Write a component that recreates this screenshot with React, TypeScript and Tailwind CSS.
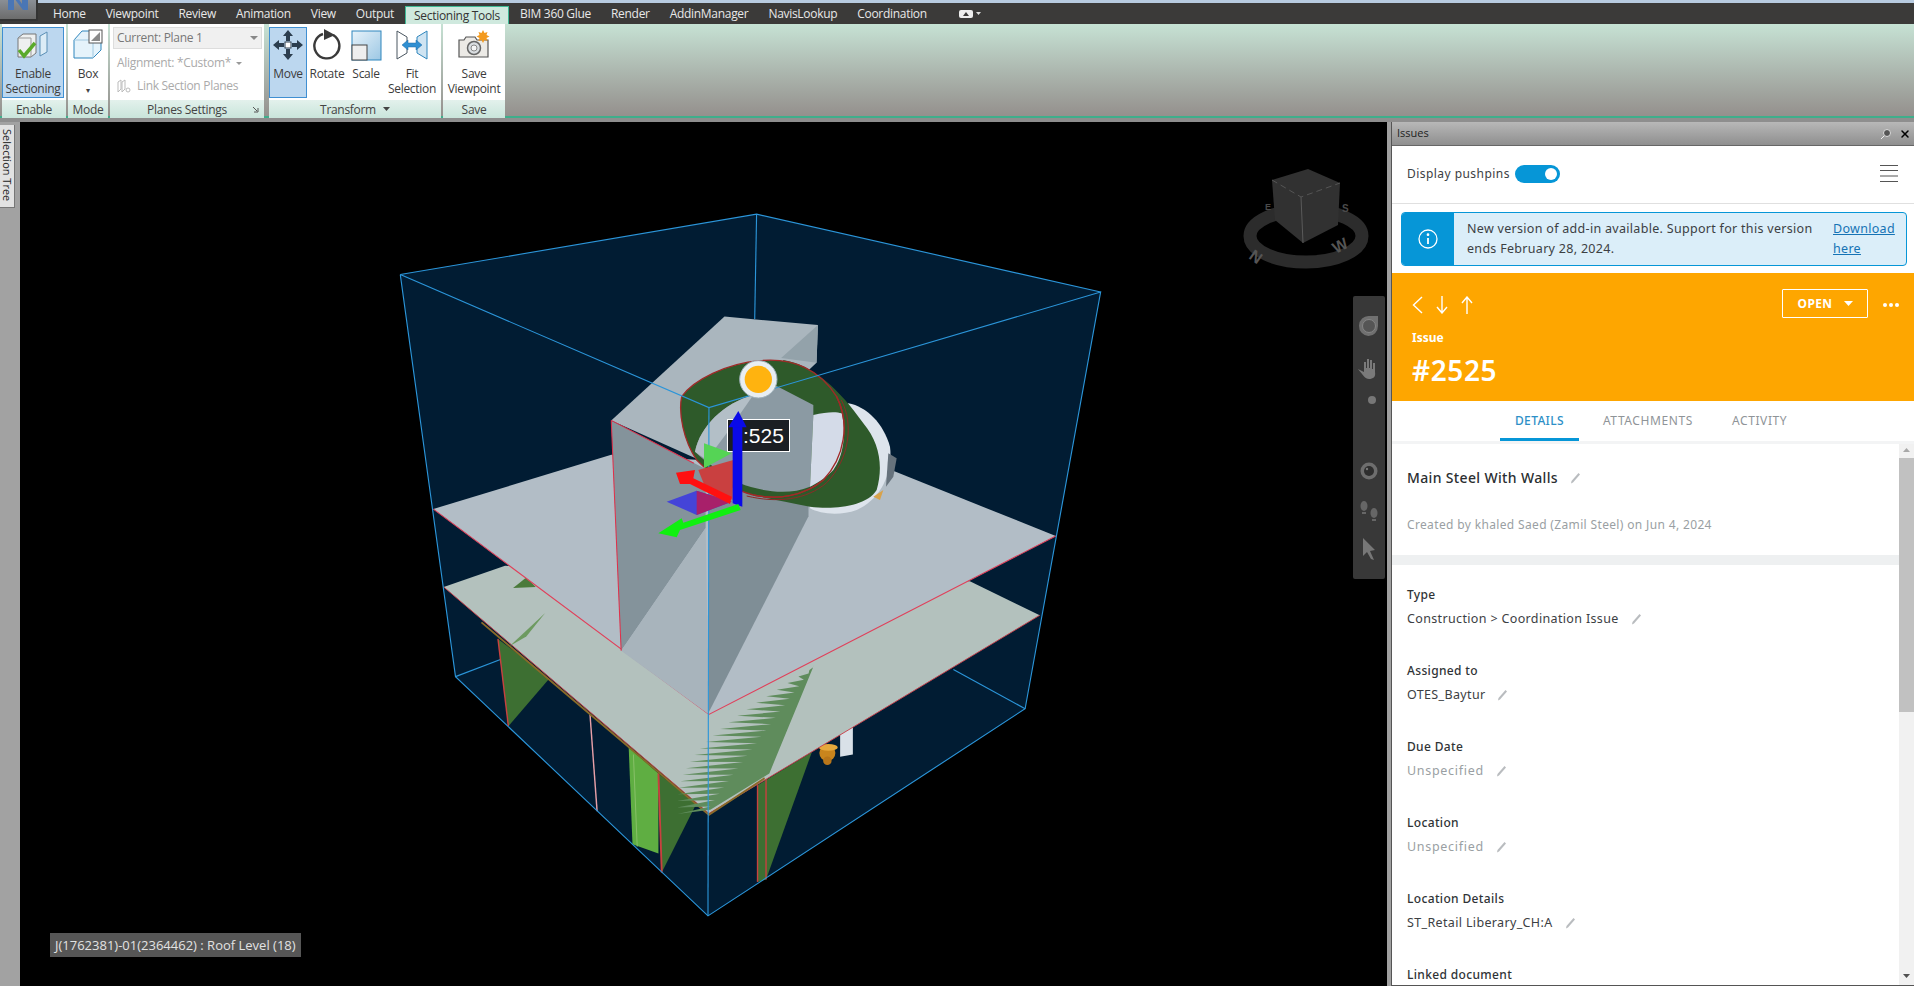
import React from "react";
import { X } from "lucide-react";

const ribbonFont = "font-['Open_Sans','Noto_Sans',sans-serif] tracking-[-0.3px]";
const panelFont = "font-['Noto_Sans','Open_Sans',sans-serif]";

const Pencil = () => (
  <svg width="11" height="12" viewBox="0 0 11 12" className="ml-[12px] shrink-0">
    <path d="M1 11.5 L1.5 9 L8.5 1 L10 2.5 L3 10.5 Z" fill="#b9bcbf" />
  </svg>
);

const tabs = ["Home", "Viewpoint", "Review", "Animation", "View", "Output"];
const tabs2 = ["BIM 360 Glue", "Render", "AddinManager", "NavisLookup", "Coordination"];

function RibbonButton({ label, icon, active, w }: { label: React.ReactNode; icon: React.ReactNode; active?: boolean; w: string }) {
  return (
    <div className={`${w} h-[71px] flex flex-col items-center text-center leading-[15px] text-[12px] text-[#3c3c3c] border ${active ? "bg-[#bcd7ef] border-[#3f8fd2]" : "border-transparent"}`}>
      <div className="h-[36px] mt-[-1px] flex items-center justify-center">{icon}</div>
      <div className="mt-[3px]">{label}</div>
    </div>
  );
}

function RibbonPanel({ label, w, children, extra }: { label: string; w: string; children: React.ReactNode; extra?: React.ReactNode }) {
  return (
    <div className={`${w} flex flex-col bg-white`}>
      <div className="h-[73px] pt-[3px] flex">{children}</div>
      <div className="relative h-[18px] mt-[3px] bg-gradient-to-b from-[#e3f1ec] to-[#c9e5db] flex items-center justify-center gap-[7px] text-[12px] leading-[17px] text-[#444]">
        {label}
        {extra}
      </div>
    </div>
  );
}

const EnableIcon = () => (
  <svg width="34" height="32" viewBox="0 0 34 32">
    <path d="M2 9 L7 5 H20 V24 L15 28 H2 Z" fill="#eef0f0" stroke="#777" />
    <path d="M2 9 H15 V28" fill="none" stroke="#999" />
    <path d="M24 7 L31 3 V23 L24 27 Z" fill="#dcecf6" stroke="#5a8fb5" />
    <path d="M3 21 L8 27 L19 14" fill="none" stroke="#5aaa2b" strokeWidth="3.5" />
  </svg>
);
const BoxIcon = () => (
  <svg width="32" height="32" viewBox="0 0 32 32">
    <path d="M2 11 L10 2 H29 V21 L21 29 H2 Z" fill="#e5f3fb" stroke="#2f86bd" />
    <path d="M2 11 H21 V29 M21 11 L29 2" fill="none" stroke="#9fc8e0" />
    <rect x="17" y="1" width="13" height="13" fill="#fff" stroke="#555" />
    <path d="M19 12 L28 3 V12 Z" fill="#8a8a8a" />
  </svg>
);
const MoveIcon = () => (
  <svg width="32" height="32" viewBox="0 0 32 32" fill="#2c3e4f">
    <path d="M16 1 L21 7 H11 Z M16 31 L21 25 H11 Z M1 16 L7 11 V21 Z M31 16 L25 11 V21 Z" />
    <path d="M14 7h4v5h-4z M14 20h4v5h-4z M7 14h5v4H7z M20 14h5v4h-5z" />
    <rect x="13" y="13" width="6" height="6" fill="#fff" stroke="#2c3e4f" />
  </svg>
);
const RotateIcon = () => (
  <svg width="30" height="32" viewBox="0 0 30 32">
    <path d="M11 5 A12.5 12.5 0 1 0 21 6" fill="none" stroke="#3a3a3a" strokeWidth="2.4" />
    <path d="M12 0 L23 6 L12 11 Z" fill="#3a3a3a" />
  </svg>
);
const ScaleIcon = () => (
  <svg width="31" height="31" viewBox="0 0 31 31">
    <defs>
      <linearGradient id="sc" x1="0" y1="0" x2="1" y2="1">
        <stop offset="0" stopColor="#e8f3fa" />
        <stop offset="1" stopColor="#9cc7e4" />
      </linearGradient>
    </defs>
    <rect x="1" y="1" width="29" height="29" fill="url(#sc)" stroke="#2f86bd" />
    <rect x="1" y="15" width="15" height="15" fill="#eee" stroke="#444" />
  </svg>
);
const FitIcon = () => (
  <svg width="32" height="30" viewBox="0 0 32 30">
    <path d="M1 1 L11 7 V23 L1 29 Z" fill="#fff" stroke="#4a5660" />
    <path d="M31 1 L21 7 V23 L31 29 Z" fill="#cfe4f2" stroke="#2f86bd" />
    <path d="M6 15 L12 10 V13 H20 V10 L26 15 L20 20 V17 H12 V20 Z" fill="#2f8fd2" stroke="#1f6ba5" strokeWidth="0.5" />
  </svg>
);
const CameraIcon = () => (
  <svg width="32" height="32" viewBox="0 0 32 32">
    <path d="M1 11 H6 L8 8 H17 L19 11 H30 V28 H1 Z" fill="#eceae6" stroke="#555" strokeWidth="1.2" />
    <circle cx="16" cy="19" r="6.5" fill="#d9dde0" stroke="#666" strokeWidth="1.5" />
    <circle cx="16" cy="19" r="3" fill="#f5f5f5" stroke="#888" />
    <path d="M25 1 l1.5 3 3-1-1 3 3 1.5-3 1.5 1 3-3-1-1.5 3-1.5-3-3 1 1-3-3-1.5 3-1.5-1-3 3 1z" fill="#f39a1e" />
  </svg>
);

function Scene() {
  const spikes: string[] = [];
  const n = 22;
  for (let i = 0; i <= n; i++) {
    const t = i / n;
    const x = 918 - (918 - 700) * t;
    const y = 990 + (1285 - 990) * t;
    const len = 8 + 115 * Math.sin(t * Math.PI * 0.82);
    spikes.push(`${x},${y}`, `${x - len},${y + 6 + 10 * t}`);
  }
  return (
    <svg width="1367" height="864" viewBox="20 122 1367 864" className="block">
      <rect x="20" y="122" width="1367" height="864" fill="#000" />
      <g transform="translate(380 200) scale(0.47192)">
        <polygon points="43,158 798,30 1527,195 1367,1078 695,1517 160,1010" fill="#011c33" />
        <g stroke="#2b95d9" strokeWidth="2.4" fill="none">
          <polyline points="43,158 798,30 1527,195" />
          <line x1="798" y1="30" x2="794" y2="252" />
          <line x1="160" y1="1010" x2="265" y2="970" />
          <line x1="1367" y1="1078" x2="1215" y2="995" />
        </g>

        {/* lower structure */}
        <polygon points="250,930 272,1115 358,1015 290,960" fill="#3d6f32" />
        <polyline points="250,930 272,1115" stroke="#c8413f" strokeWidth="3" fill="none" />
        <polyline points="445,1090 460,1295" stroke="#e8a0a8" strokeWidth="3" fill="none" />
        <polygon points="527,1160 535,1365 590,1385 590,1215" fill="#5fae42" />
        <polyline points="537,1175 545,1370" stroke="#8ac16a" strokeWidth="2" fill="none" />
        <polygon points="590,1215 597,1425 670,1280" fill="#3d6f32" />
        <polyline points="590,1215 597,1425" stroke="#c8413f" strokeWidth="4" fill="none" />
        <polygon points="800,1240 800,1445 818,1440 915,1170" fill="#3d6f32" />
        <line x1="800" y1="1240" x2="800" y2="1445" stroke="#c8413f" strokeWidth="3" />
        <line x1="818" y1="1225" x2="818" y2="1440" stroke="#c8413f" strokeWidth="3" />
        <polygon points="975,1130 1002,1115 1002,1175 975,1180" fill="#d9e1e8" />
        <circle cx="948" cy="1172" r="17" fill="#c9851d" />
        <ellipse cx="950" cy="1160" rx="20" ry="7" fill="#e6a83c" />
        <circle cx="948" cy="1188" r="9" fill="#b8761a" />
        <polygon points="960,950 990,940 990,962 965,962" fill="#d88a1e" />
        <polygon points="1005,930 1018,928 1012,975 1003,972" fill="#cfd7de" />
        <polygon points="855,1015 878,1002 870,1040 860,1040" fill="#dfe5ea" />

        {/* second plane */}
        <polygon points="135,820 265,775 1250,808 1398,880 697,1300" fill="#b3c1bd" />
        <polyline points="135,820 697,1300 1398,880" stroke="#c9404a" strokeWidth="2" fill="none" />
        <polyline points="215,895 697,1303 815,1225" stroke="#8a6a2a" strokeWidth="4" fill="none" />
        <polygon points="282,822 310,800 330,820" fill="#4a7a3a" />
        <polygon points="350,875 275,945 310,925" fill="#6d9a60" />
        <polygon points={spikes.join(" ") + " 700,1292 825,1215 920,985"} fill="#5f8c5c" />

        {/* upper plane */}
        <polygon points="113,655 490,540 1090,575 1432,712 697,1090" fill="#b2bdc6" />
        <polyline points="113,655 697,1090 1432,712" stroke="#e0405a" strokeWidth="2.2" fill="none" />

        {/* column */}
        <polygon points="490,467 730,247 928,265 925,345 697,560" fill="#aab6be" />
        <polygon points="490,467 690,570 690,695 511,955" fill="#84939b" />
        <polygon points="511,955 690,695 697,1090" fill="#a8b4bc" />
        <polygon points="697,1085 697,590 770,600 908,640 908,670" fill="#7f8e96" />
        <polygon points="928,265 925,345 850,335" fill="#93a2aa" />
        <polyline points="490,467 665,558" stroke="#e0304a" strokeWidth="2.2" fill="none" />
        <polyline points="490,467 511,955" stroke="#e0304a" strokeWidth="2.2" fill="none" />
      </g>

      <g transform="translate(580 300) scale(0.33333)">
        <path d="M805,310 C860,320 910,370 930,440 C940,520 900,600 830,630 C780,648 720,642 690,625 L690,500 Z" fill="#dde4ec" />
        <path d="M925,460 L950,475 L940,530 L918,560 Z" fill="#66727c" />
        <path d="M880,590 L910,570 L900,600 Z" fill="#d8a24a" />
        <path d="M610,180 C700,195 780,270 850,370 C900,430 910,500 890,570 C860,620 760,630 690,620 C620,605 560,595 500,580 Z" fill="#2e5a2a" />
        <path d="M305,290 C340,240 440,190 540,182 C640,172 720,210 770,290 C810,370 795,470 730,540 C670,590 590,600 520,585 C460,570 400,530 350,480 C310,420 295,340 305,290Z" fill="#2e5a2a" stroke="#a02a28" strokeWidth="4" />
        <path d="M345,455 C360,380 430,310 520,285 L590,258 L700,315 L700,345 L690,560 C620,590 530,570 480,550 C430,520 380,490 345,455Z" fill="#8b9aa3" />
        <path d="M345,455 C360,380 430,310 520,285 L440,400 L380,480Z" fill="#b3bfc7" />
        <path d="M700,345 C740,335 770,335 785,340 C800,400 790,470 760,510 C730,540 710,550 690,560 Z" fill="#d4dbe8" />
        <path d="M770,290 C810,370 795,470 730,540 C670,590 590,600 520,585" fill="none" stroke="#a02a28" strokeWidth="4" />
        <path d="M784,300 C822,372 808,478 740,548 C680,600 590,610 500,588" fill="none" stroke="#8c2a26" strokeWidth="3" />
      </g>

      {/* front box edges */}
      <g transform="translate(380 200) scale(0.47192)" fill="none" stroke="#2b95d9" strokeWidth="2.4">
        <polyline points="43,158 697,440 1527,195 1367,1078 695,1517 160,1010 43,158" />
        <line x1="697" y1="440" x2="695" y2="1517" />
      </g>

      {/* label, under the gizmo's blue axis */}
      <rect x="727.5" y="419.5" width="62" height="32" fill="#1b1f24" stroke="#fff" />
      <text x="743" y="443" fontSize="21" fill="#fff" fontFamily="Liberation Sans">:525</text>

      {/* gizmo */}
      <g transform="translate(580 300) scale(0.33333)">
        <polygon points="260,605 350,572 455,605 350,645" fill="#4444d8" />
        <polygon points="350,572 455,605 350,645" fill="#a8206a" />
        <polygon points="372,430 455,460 372,505" fill="#55d455" />
        <polygon points="355,510 460,480 458,600 375,560" fill="#c94040" />
        <polygon points="455,590 340,535 345,510 288,518 300,552 330,552 450,612" fill="#ff1010" />
        <polygon points="458,365 487,365 487,620 458,610" fill="#0a0ae8" />
        <polygon points="475,333 445,382 500,382" fill="#0a0ae8" />
        <polygon points="475,612 310,668 305,655 235,700 290,712 300,690 482,630" fill="#10f010" />
        <circle cx="535" cy="238" r="56" fill="#e8eef2" stroke="#9fb0ba" strokeWidth="3" />
        <circle cx="535" cy="238" r="41" fill="#ffb30f" />
      </g>

      {/* view cube */}
      <ellipse cx="1306" cy="236" rx="56" ry="26" fill="none" stroke="#2c2c2c" strokeWidth="13" />
      <polygon points="1272,180 1308,169 1340,183 1338,225 1303,243 1275,220" fill="#313131" />
      <polyline points="1272,180 1301,197 1340,183" fill="none" stroke="#555" strokeDasharray="6 4" />
      <line x1="1301" y1="197" x2="1303" y2="243" stroke="#5a5a5a" />
      <text x="1248" y="258" fontSize="16" fill="#555" fontFamily="Liberation Sans" fontWeight="700" transform="rotate(35 1248 258)">N</text>
      <text x="1336" y="254" fontSize="16" fill="#555" fontFamily="Liberation Sans" fontWeight="700" transform="rotate(-28 1336 254)">W</text>
      <text x="1342" y="212" fontSize="10" fill="#4a4a4a" fontFamily="Liberation Sans" fontWeight="700">S</text>
      <text x="1265" y="210" fontSize="9" fill="#4a4a4a" fontFamily="Liberation Sans" fontWeight="700">E</text>
    </svg>
  );
}

function NavBar() {
  return (
    <div className="absolute left-[1333px] top-[174px] w-[32px] h-[283px] rounded-[2px] bg-[#383838] flex flex-col items-center">
      <svg width="24" height="24" viewBox="0 0 24 24" className="mt-[18px] ml-[-1px]">
        <path d="M12 2 H21 V12 A9.5 10 0 1 1 12 2Z" fill="#707070" />
        <circle cx="12" cy="12" r="6.5" fill="#555" stroke="#868686" />
      </svg>
      <svg width="24" height="24" viewBox="0 0 24 24" className="mt-[18px]" fill="#7a7a7a">
        <path d="M1 13 L7 16 V6 h2 V12 h1 V3 h2 V12 h1 V4 h2 V13 h1 V7 h2 V16 C19 21 16 23 12 23 C8 23 6 19 1 13Z" />
      </svg>
      <svg width="16" height="10" viewBox="0 0 16 10" className="mt-[15px] ml-[6px]">
        <circle cx="8" cy="5" r="4" fill="#777" />
      </svg>
      <svg width="20" height="20" viewBox="0 0 20 20" className="mt-[56px]">
        <circle cx="10" cy="10" r="8.5" fill="#6e6e6e" />
        <circle cx="10" cy="10" r="5" fill="#2e2e2e" />
        <circle cx="8" cy="8" r="1.2" fill="#777" />
      </svg>
      <svg width="20" height="26" viewBox="0 0 20 26" className="mt-[18px]" fill="#666">
        <ellipse cx="5" cy="7" rx="3.5" ry="5" />
        <rect x="3" y="13" width="4" height="2" />
        <ellipse cx="15" cy="14" rx="3.5" ry="5" />
        <rect x="13" y="20" width="4" height="2" />
      </svg>
      <svg width="16" height="24" viewBox="0 0 16 24" className="mt-[12px]" fill="#777">
        <path d="M2 1 L14 13 L9 14 L13 23 L10 22 L6 15 L2 19 Z" />
      </svg>
    </div>
  );
}

function Field({ label, value, muted }: { label: string; value: string; muted?: boolean }) {
  return (
    <div className="h-[76px]">
      <div className="text-[12px] leading-[18px] font-medium text-[#2f3336]">{label}</div>
      <div className={`mt-[6px] flex items-center leading-[18px] ${muted ? "text-[12.5px] tracking-[0.7px] text-[#9a9fa3]" : "text-[12.5px] text-[#3c4043]"}`}>
        {value}
        <Pencil />
      </div>
    </div>
  );
}

export default function App() {
  return (
    <div className="relative w-[1914px] h-[986px] overflow-hidden flex flex-col bg-[#999]">
      {/* title strip */}
      <div className="h-[3px] bg-[#b8cbe0]" />
      {/* tab bar */}
      <div className={`${ribbonFont} h-[21px] bg-[#3b3a39] flex items-end pl-[43px] text-[12px] text-[#e8e8e8]`}>
        {tabs.map((t) => (
          <div key={t} className="px-[10px] h-[21px] leading-[21px]">{t}</div>
        ))}
        <div className="ml-[1px] h-[18px] w-[104px] text-center leading-[18px] bg-[#cfe9de] text-[#333] border-t border-x border-[#3fb996]">Sectioning Tools</div>
        <div className="ml-[1px] flex">
          {tabs2.map((t) => (
            <div key={t} className="px-[10px] h-[21px] leading-[21px]">{t}</div>
          ))}
        </div>
        <div className="ml-[22px] h-[21px] flex items-center gap-[3px]">
          <svg width="14" height="8" viewBox="0 0 14 8"><rect width="14" height="8" rx="2" fill="#eee" /><path d="M4 6 L7 2 L10 6Z" fill="#3b3a39" /></svg>
          <svg width="5" height="3" viewBox="0 0 5 3"><path d="M0 0H5L2.5 3Z" fill="#ddd" /></svg>
        </div>
      </div>
      {/* ribbon */}
      <div className={`${ribbonFont} h-[94px] bg-gradient-to-b from-[#c6e2d4] to-[#94908d] border-b-2 border-[#3fae8b] flex pl-[2px] gap-[2px] items-start`}>
        <RibbonPanel label="Enable" w="w-[64px]">
          <RibbonButton w="w-[62px]" active label={<>Enable<br />Sectioning</>} icon={<EnableIcon />} />
        </RibbonPanel>
        <RibbonPanel label="Mode" w="w-[40px]">
          <RibbonButton w="w-[40px]" label={<>Box<br /><span className="text-[8px] leading-[10px] text-[#444]">▾</span></>} icon={<BoxIcon />} />
        </RibbonPanel>
        <RibbonPanel
          label="Planes Settings"
          w="w-[154px]"
          extra={
            <svg width="7" height="7" viewBox="0 0 7 7" className="absolute right-[5px] top-[6px]"><path d="M1 1 L5 5 M6 2 V6 H2" stroke="#555" fill="none" /></svg>
          }
        >
          <div className="w-full text-[12px] text-[#aaa] flex flex-col pl-[3px] pr-[2px]">
            <div className="h-[22px] bg-[#f0f0f0] border border-[#ddd] text-[#777] flex items-center justify-between px-[3px]">
              <span>Current: Plane 1</span>
              <svg width="8" height="4" viewBox="0 0 8 4"><path d="M0 0H8L4 4Z" fill="#888" /></svg>
            </div>
            <div className="h-[24px] mt-[2px] flex items-center px-[4px] gap-[5px]">
              <span>Alignment: *Custom*</span>
              <svg width="6" height="3" viewBox="0 0 6 3"><path d="M0 0H6L3 3Z" fill="#999" /></svg>
            </div>
            <div className="h-[22px] flex items-center px-[4px] gap-[6px]">
              <svg width="14" height="14" viewBox="0 0 14 14" fill="none" stroke="#bbb"><path d="M1 3 L4 1 V10 L1 13Z M5 3 L8 1 V10 L5 13Z" /><circle cx="11" cy="11" r="2" /></svg>
              <span>Link Section Planes</span>
            </div>
          </div>
        </RibbonPanel>
        <div className="w-[1px]" />
        <RibbonPanel
          label="Transform"
          w="w-[172px]"
          extra={
            <svg width="7" height="4" viewBox="0 0 7 4"><path d="M0 0H7L3.5 4Z" fill="#444" /></svg>
          }
        >
          <RibbonButton w="w-[38px]" active label="Move" icon={<MoveIcon />} />
          <RibbonButton w="w-[40px]" label="Rotate" icon={<RotateIcon />} />
          <RibbonButton w="w-[38px]" label="Scale" icon={<ScaleIcon />} />
          <RibbonButton w="w-[54px]" label={<>Fit<br />Selection</>} icon={<FitIcon />} />
        </RibbonPanel>
        <RibbonPanel label="Save" w="w-[62px]">
          <RibbonButton w="w-[62px]" label={<>Save<br />Viewpoint</>} icon={<CameraIcon />} />
        </RibbonPanel>
      </div>

      {/* main */}
      <div className="h-[4px] bg-[#8e8e8e]" />
      <div className="flex-1 flex min-h-0">
        <div className="w-[20px] bg-[#a2a2a2] pt-[3px] shrink-0">
          <div className="font-['Open_Sans',sans-serif] w-[15px] h-[83px] pt-[4px] bg-[#e2e2e2] border-r border-b border-[#777] text-[11px] text-[#222] leading-[14px] [writing-mode:vertical-rl] whitespace-nowrap">
            Selection Tree
          </div>
        </div>

        <div className="relative w-[1367px] h-[864px] shrink-0 bg-black">
          <Scene />
          <NavBar />
          <div className="absolute left-[30px] top-[811px] w-[251px] h-[24px] bg-[#565656] text-[#e2e2e2] text-[13px] leading-[24px] pl-[5px] font-['Open_Sans',sans-serif] whitespace-nowrap">
            J(1762381)-01(2364462) : Roof Level (18)
          </div>
        </div>

        <div className="w-[4px] bg-[#a0a0a0] shrink-0" />

        {/* issues panel */}
        <div className={`${panelFont} flex-1 min-w-0 bg-white border-l border-[#555] flex flex-col border-b`}>
          <div className="h-[24px] shrink-0 bg-gradient-to-b from-[#b8b8b8] to-[#8f8f8f] border-b border-[#666] flex items-center justify-between pl-[5px] pr-[3px] text-[11px] text-[#222] font-['Open_Sans',sans-serif]">
            <span>Issues</span>
            <span className="flex items-center gap-[7px]">
              <svg width="12" height="12" viewBox="0 0 12 12"><path d="M1 11 L5 7" stroke="#eee" /><circle cx="7" cy="5" r="3.5" fill="#555" stroke="#ddd" /></svg>
              <X size={12} strokeWidth={3} className="text-black" />
            </span>
          </div>

          <div className="h-[58px] pb-[2px] shrink-0 border-b border-[#e0e0e0] flex items-center pl-[15px] pr-[16px] text-[12px] text-[#3c4043]">
            <span className="tracking-[0.45px]">Display pushpins</span>
            <div className="ml-[5px] w-[45px] h-[18px] rounded-full bg-[#0696d7] flex items-center justify-end pr-[3px]">
              <div className="w-[12px] h-[12px] rounded-full bg-white" />
            </div>
            <svg width="18" height="17" viewBox="0 0 18 17" className="ml-auto" stroke="#555">
              <path d="M0 .5H18M0 5.5H18M0 11H18M0 16.5H18" />
            </svg>
          </div>

          <div className="shrink-0 h-[69px] pt-[8px] pl-[9px] pr-[7px]">
            <div className="h-[54px] rounded-[4px] border border-[#0696d7] bg-[#dbeef9] flex overflow-hidden text-[12.5px] leading-[20px] text-[#3c4043] tracking-[0.3px]">
              <div className="w-[52px] bg-[#0696d7] flex items-center justify-center shrink-0">
                <svg width="20" height="20" viewBox="0 0 20 20" fill="none" stroke="#fff" strokeWidth="1.3">
                  <circle cx="10" cy="10" r="9" />
                  <path d="M10 9 V15" strokeWidth="1.8" />
                  <circle cx="10" cy="5.7" r="0.7" fill="#fff" />
                </svg>
              </div>
              <div className="pl-[13px] pt-[6px] w-[379px] shrink-0">New version of add-in available. Support for this version ends February 28, 2024.</div>
              <a className="pt-[6px] w-[66px] shrink-0 underline text-[#1573b5]">Download here</a>
            </div>
          </div>

          <div className="shrink-0 h-[128px] bg-[#fea600] text-white relative pl-[20px]">
            <div className="pt-[16px] h-[48px] flex items-center gap-[13px]">
              <svg width="11" height="18" viewBox="0 0 11 18" fill="none" stroke="#fff" strokeWidth="1.4" className="shrink-0"><path d="M10 1 L1.5 9 L10 17" /></svg>
              <svg width="12" height="18" viewBox="0 0 12 18" fill="none" stroke="#fff" strokeWidth="1.4" className="shrink-0"><path d="M6 0 V17 M1 11 L6 17 L11 11" /></svg>
              <svg width="12" height="18" viewBox="0 0 12 18" fill="none" stroke="#fff" strokeWidth="1.4" className="shrink-0"><path d="M6 18 V1 M1 7 L6 1 L11 7" /></svg>
            </div>
            <div className="absolute left-[390px] top-[16px] w-[86px] h-[29px] border border-white rounded-[1px] flex items-center justify-center gap-[11px] text-[12px] font-bold tracking-[0.4px]">
              OPEN
              <svg width="9" height="5" viewBox="0 0 9 5"><path d="M0 0H9L4.5 5Z" fill="#fff" /></svg>
            </div>
            <div className="absolute left-[491px] top-[30px] flex gap-[2px]">
              <span className="w-[4px] h-[4px] rounded-full bg-white" />
              <span className="w-[4px] h-[4px] rounded-full bg-white" />
              <span className="w-[4px] h-[4px] rounded-full bg-white" />
            </div>
            <div className="mt-[9px] text-[12px] leading-[16px] font-bold">Issue</div>
            <div className="mt-[6px] text-[28px] leading-[36px] font-semibold tracking-[0.6px]">#2525</div>
          </div>

          <div className="shrink-0 h-[40px] flex pl-[108px] gap-[9px] text-[12px] tracking-[0.6px] text-[#8f9498]">
            <div className="px-[15px] h-[40px] leading-[40px] tracking-[0.35px] text-[#2d8fc7] border-b-[3px] border-[#0696d7] font-medium">DETAILS</div>
            <div className="px-[15px] h-[40px] leading-[40px]">ATTACHMENTS</div>
            <div className="px-[15px] h-[40px] leading-[40px]">ACTIVITY</div>
          </div>
          <div className="shrink-0 h-[3px] bg-[#f3f4f5]" />

          <div className="flex-1 min-h-0 flex">
            <div className="flex-1 min-w-0 overflow-hidden tracking-[0.35px]">
              <div className="pl-[15px] pt-[24px] h-[111px]">
                <div className="flex items-center text-[14px] leading-[20px] font-medium text-[#2b2e31]">
                  Main Steel With Walls
                  <Pencil />
                </div>
                <div className="mt-[28px] text-[12px] leading-[18px] text-[#9a9fa3]">Created by khaled Saed (Zamil Steel) on Jun 4, 2024</div>
              </div>
              <div className="h-[10px] bg-[#eef0f1]" />
              <div className="pl-[15px] pt-[21px]">
                <Field label="Type" value="Construction > Coordination Issue" />
                <Field label="Assigned to" value="OTES_Baytur" />
                <Field muted label="Due Date" value="Unspecified" />
                <Field muted label="Location" value="Unspecified" />
                <Field label="Location Details" value="ST_Retail Liberary_CH:A" />
                <div className="text-[12px] leading-[18px] font-medium text-[#2f3336]">Linked document</div>
              </div>
            </div>
            <div className="w-[15px] shrink-0 bg-[#f1f1f1] flex flex-col items-center relative">
              <svg width="7" height="4" viewBox="0 0 7 4" className="mt-[4px]"><path d="M0 4H7L3.5 0Z" fill="#a8a8a8" /></svg>
              <div className="w-full h-[254px] mt-[6px] bg-[#c1c1c1]" />
              <svg width="7" height="4" viewBox="0 0 7 4" className="mt-auto mb-[7px]"><path d="M0 0H7L3.5 4Z" fill="#505050" /></svg>
            </div>
          </div>
        </div>
      </div>

      {/* app button */}
      <div className="absolute left-0 top-0 w-[38px] h-[21px] bg-gradient-to-b from-[#8a8f96] to-[#6c6c6c] border-b-2 border-r-2 border-[#333] overflow-hidden">
        <svg width="30" height="20" viewBox="0 0 30 20" className="ml-[4px] mt-[-8px]"><path d="M4 0 H10 L18 12 V0 H24 V18 H19 L10 6 V18 H4 Z" fill="#4a76b5" /></svg>
      </div>
    </div>
  );
}
